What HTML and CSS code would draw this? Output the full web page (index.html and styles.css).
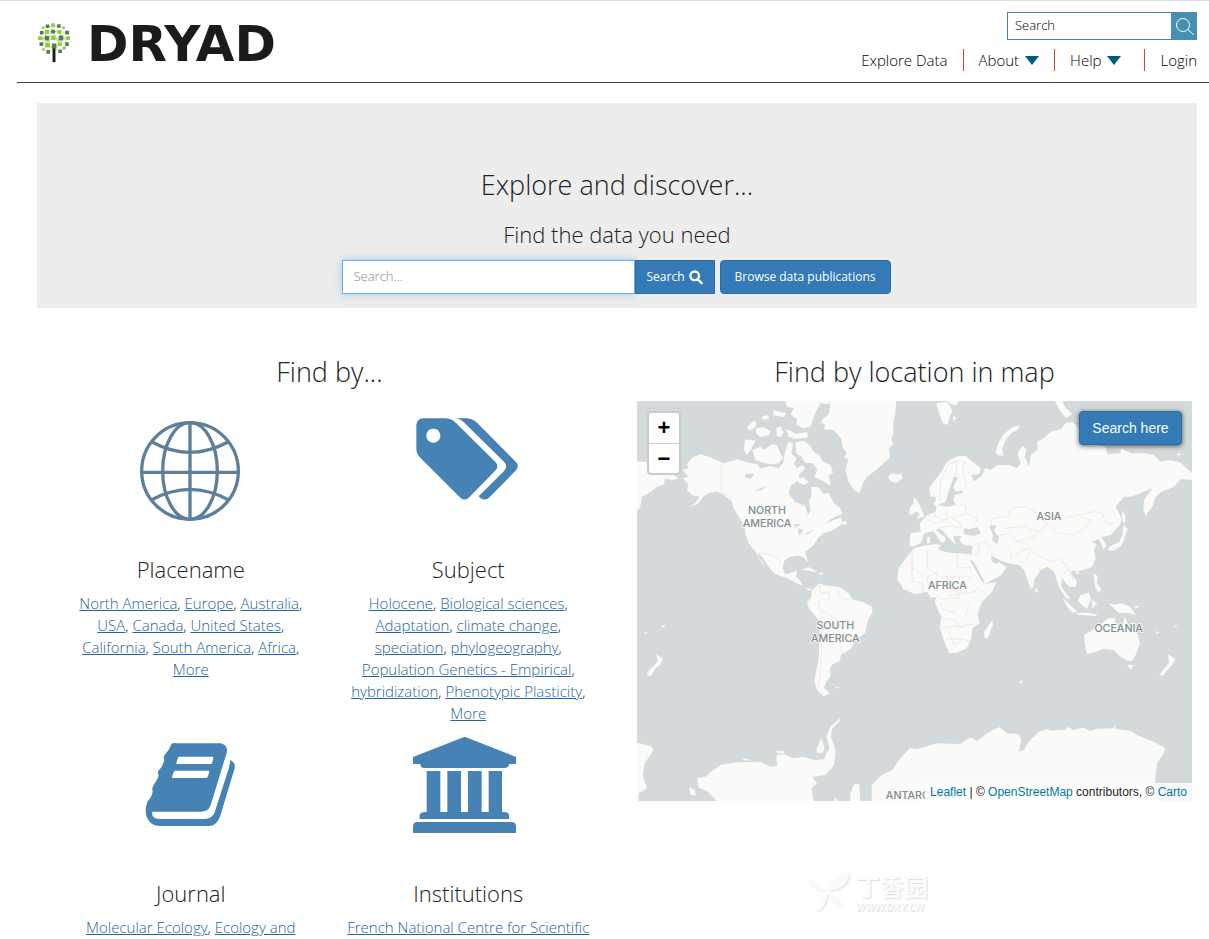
FILE: index.html
```html
<!DOCTYPE html>
<html lang="en">
<head>
<meta charset="utf-8">
<meta name="viewport" content="width=device-width, initial-scale=1">
<title>Dryad</title>
<link rel="stylesheet" href="styles.css">
</head>
<body>
<header class="site-header">
  <a class="logo" href="#" aria-label="Dryad home">
    <svg class="logo-tree" viewBox="108 60 105 128" aria-hidden="true">
      <g stroke="#a3c95c" stroke-width="2" fill="none"><path d="M141 76L176 76M123 95L157 91L202 95M118 112H205M122 131L158 112L201 131M139 92L122 131M177 92L202 131M158 72L139 134L178 152M158 92L178 132L143 154"/></g>
      <path fill="#1b1b1b" d="M156 138h9v48h-9z"/>
      <g fill="#4d7d5b"><path d="M135 70h11v11h-11zM170 69h11v11h-11zM117 90h11v11h-11zM152 86h12v12h-12zM195 89h12v12h-12zM132 105h13v14h-13zM175 104h14v15h-14zM116 125h11v11h-11zM154 129h14v15h-14zM195 125h11v11h-11zM137 149h11v11h-11zM174 147h11v11h-11z"/></g>
      <g fill="#98c93c"><path d="M152 66h11v11h-11zM123 76h8v8h-8zM186 76h8v8h-8zM133 86h12v13h-12zM171 87h12v12h-12zM111 106h14v12h-14zM152 104h13v14h-13zM197 106h13v12h-13zM133 126h15v15h-15zM172 125h12v12h-12zM124 143h8v8h-8zM187 138h10v9h-10z"/></g>
    </svg>
    <span class="logo-text">DRYAD</span>
  </a>
  <div class="header-tools">
    <form class="mini-search">
      <input type="text" aria-label="Search" placeholder="Search">
      <button type="button" aria-label="Submit search"><svg viewBox="0 0 26 26" aria-hidden="true"><circle cx="12" cy="12" r="6.5"/><path d="M16.8 16.5L23 22"/></svg></button>
    </form>
    <nav class="main-nav">
      <a href="#">Explore Data</a>
      <button type="button">About <span class="caret"></span></button>
      <button type="button" class="nav-help">Help <span class="caret"></span></button>
      <a href="#">Login</a>
    </nav>
  </div>
</header>

<main>
  <section class="hero">
    <h1>Explore and discover...</h1>
    <h2><label for="q">Find the data you need</label></h2>
    <form class="hero-form">
      <input id="q" type="text" placeholder="Search...">
      <button type="button" class="btn btn-search">Search <svg viewBox="0 0 42 44" aria-hidden="true"><circle cx="17" cy="17" r="13"/><path d="M26 27L38 39"/></svg></button>
      <a href="#" class="btn btn-browse">Browse data publications</a>
    </form>
  </section>

  <div class="columns">
    <section class="find">
      <h2 class="column-title">Find by...</h2>
      <div class="facets">
        <article class="facet">
          <svg class="facet-icon" viewBox="33 3 360 450" fill="none" stroke="#5f7f98" stroke-width="10" aria-hidden="true">
            <circle cx="210" cy="213" r="145"/><ellipse cx="210" cy="213" rx="82" ry="145"/><path d="M210 68V358M65 217H355M96 126Q210 188 324 126M96 299Q210 237 324 299"/>
          </svg>
          <h3>Placename</h3>
          <p><a href="#">North America</a>, <a href="#">Europe</a>, <a href="#">Australia</a>, <a href="#">USA</a>, <a href="#">Canada</a>, <a href="#">United States</a>, <a href="#">California</a>, <a href="#">South America</a>, <a href="#">Africa</a>, <a href="#">More</a></p>
        </article>
        <article class="facet">
          <svg class="facet-icon" viewBox="864 3 360 450" fill="#4682b4" aria-hidden="true">
            <path fill-rule="evenodd" d="M910 55H978Q995 56 1008 69L1127 187Q1138 199 1127 211L1046 293Q1034 304 1021 293L901 173Q889 161 889 146V76Q890 56 910 55ZM940 86a21 21 0 1 0 .1 0Z"/>
            <path d="M1008 55H1041Q1060 57 1072 69L1188 186Q1199 198 1188 211L1107 293Q1094 304 1081 294L1076 289L1150 215Q1166 200 1152 185L1030 65Q1021 57 1008 55Z"/>
          </svg>
          <h3>Subject</h3>
          <p><a href="#">Holocene</a>, <a href="#">Biological sciences</a>, <a href="#">Adaptation</a>, <a href="#">climate change</a>, <a href="#">speciation</a>, <a href="#">phylogeography</a>, <a href="#">Population Genetics - Empirical</a>, <a href="#">hybridization</a>, <a href="#">Phenotypic Plasticity</a>, <a href="#">More</a></p>
        </article>
        <article class="facet">
          <svg class="facet-icon" viewBox="33 -15 360 450" fill="#4682b4" aria-hidden="true">
            <path fill-rule="evenodd" d="M155 41Q162 38 170 40H302Q325 45 320 69L272 225Q266 244 246 245H97Q93 266 118 267H253Q277 267 284 247L326 116Q331 102 330 90Q348 97 344 115L301 257Q291 286 270 288H117Q91 287 80 261Q73 242 82 215Q97 200 98 184Q95 173 101 165Q112 149 116 137Q111 127 117 120Q128 110 133 91Q129 82 134 75Q147 61 155 41ZM177 80Q172 82 169 102H274Q279 97 280 80ZM165 122Q159 125 156 144H260Q266 139 268 122Z"/>
          </svg>
          <h3>Journal</h3>
          <p><a href="#">Molecular Ecology</a>, <a href="#">Ecology and</a></p>
        </article>
        <article class="facet">
          <svg class="facet-icon" viewBox="864 -15 360 450" fill="#4682b4" aria-hidden="true">
            <path d="M1034 20L1188 81V102H1168Q1166 112 1156 114H910Q901 111 900 102H879V81ZM920 123H961V246H982V123H1023V246H1044V123H1085V246H1106V123H1146V246Q1166 245 1167 255V267H899V255Q901 245 920 246ZM890 276H1177Q1187 278 1188 288V309H879V288Q880 277 890 276Z"/>
          </svg>
          <h3>Institutions</h3>
          <p><a href="#">French National Centre for Scientific</a></p>
        </article>
      </div>
    </section>

    <section class="location">
      <h2 class="column-title">Find by location in map</h2>
      <div class="map">
        <svg class="world" viewBox="0 0 1665 1200" preserveAspectRatio="xMidYMid slice" role="img" aria-label="World map">
          <g class="land">
            <g transform="translate(0 -3)">
              <path d="M0 184L30 186L36 222L60 225L100 218L125 235L105 241L85 236L80 255L60 260L42 276L15 290L10 320L0 333Z"/>
              <path d="M150 192L165 173L190 163L225 175L262 190L300 178L335 188L360 192L370 205L400 198L425 205L438 190L442 165L454 125L468 130L463 160L478 175L470 192L480 205L496 195L505 205L485 225L490 239L462 255L455 282L475 306L505 318L513 345L521 330L516 304L524 285L522 260L545 262L560 282L575 278L590 308L610 325L616 342L585 355L565 370L590 361L612 352L615 365L628 362L630 375L615 372L602 380L585 392L560 398L545 412L530 435L505 455L513 488L498 470L480 467L455 472L442 482L437 505L445 523L460 520L480 510L477 530L490 542L498 562L525 567L518 573L490 555L450 535L410 520L395 500L375 470L360 458L368 475L387 500L375 490L355 455L335 430L325 400L323 380L302 345L290 325L285 305L260 285L240 275L215 278L199 290L180 313L155 322L176 308L188 290L165 286L150 270L155 255L138 235L154 230L137 210L154 205Z"/>
              <path d="M475 128L500 122L520 138L530 155L548 165L556 184L580 195L588 218L575 228L582 258L560 245L545 236L532 231L541 208L525 188L505 190L493 170L478 160Z"/>
              <path d="M346 150L370 140L382 150L405 133L420 135L425 150L438 173L425 190L405 193L385 190L355 180ZM325 118L356 122L342 148L330 164L320 150ZM330 82L345 66L358 64L355 80L338 92ZM357 85L378 82L400 92L398 105L372 111L358 102ZM407 30L430 35L448 40L442 52L410 46ZM418 85L430 78L440 98L432 112L419 108ZM374 50L390 45L399 55L380 60ZM446 88L462 92L475 102L510 96L514 112L475 117L455 110ZM484 238L500 232L516 248L500 254L485 248Z"/>
              <path d="M443 0H580L575 12L550 10L535 38L530 52L520 80L500 85L478 76L480 58L461 44L470 25L450 20Z"/>
              <path d="M580 0H778L775 40L768 70L770 100L762 120L770 132L755 145L760 172L740 190L715 212L690 230L678 248L668 279L650 270L635 245L625 210L634 180L622 172L630 158L618 145L612 115L590 90L560 88L565 75L550 65L575 42L579 20Z"/>
              <path d="M754 228L767 220L783 224L792 220L797 234L780 249L758 243ZM495 508L518 502L541 516L520 514ZM541 520L560 518L555 524ZM818 325L830 310L829 292L840 300L855 330L862 350L838 356L848 343L838 334L825 344L815 343Z"/>
              <path d="M830 446L855 438L901 431L907 450L935 458L965 460L1000 463L1006 483L1025 520L1044 552L1078 547L1065 575L1035 605L1026 630L1022 645L1028 670L1006 685L1004 710L990 745L960 758L937 760L920 720L908 680L914 650L906 635L893 605L899 592L880 593L870 575L835 583L800 568L781 538L785 505L810 470Z"/>
            </g>
            <g transform="translate(831 -3)">
              <path d="M-14 435L-11 400L20 395L17 370L40 345L65 335L68 322L58 311L65 301L65 290L50 290L45 265L75 225L100 185L130 168L155 168L200 205L195 222L172 225L180 245L205 225L214 203L230 210L250 195L285 195L310 205L320 190L310 160L325 138L338 148L332 170L345 200L350 165L370 150L370 125L390 115L410 95L440 88L455 70L475 66L500 90L520 125L575 140L580 160L622 145L650 160L690 160L720 165L740 185L770 180L800 188L834 220V240L800 237L780 260L740 277L725 290L715 320L695 347L688 330L690 300L715 265L690 275L650 290L630 290L605 320L623 355L618 375L590 405L562 411L578 438L568 447L555 417L530 425L548 432L540 450L545 475L535 500L500 512L475 512L470 520L490 545L484 562L463 559L446 535L440 558L470 598L455 593L436 563L420 515L400 500L380 510L360 540L358 562L350 567L330 510L315 495L285 490L262 483L230 465L238 488L254 486L278 502L262 525L213 552L190 510L170 480L175 438L150 435L135 420L143 408L118 408L125 435L110 420L90 395L75 385L65 390L92 410L95 424L83 430L60 395L45 395L30 402L20 430L-5 440Z"/>
              <path d="M245 155L253 130L268 104L290 85L318 75L312 89L292 99L275 120L265 145L268 168L250 165ZM67 10L100 5L115 30L100 75L87 70L75 38ZM100 0H138L127 16L110 13ZM117 47L130 54L117 64ZM420 0H445L453 22L475 43L455 53L438 32ZM624 330L635 348L633 370L625 365ZM628 375L642 388L635 398L628 425L620 439L598 453L580 450L590 438L616 425L625 405ZM40 412L48 411L47 430L38 430ZM65 435L80 435L78 443ZM538 520L551 528L548 550L562 568L553 578L543 560ZM500 585L525 578L531 598L519 626L500 613L491 602ZM485 514L498 516L490 524ZM790 160L805 162L790 168ZM365 563L372 569L370 579L363 574Z"/>
            </g>
            <g transform="translate(0 597)">
              <path d="M525 -30L548 -50L560 -45L580 -43L610 -38L635 -20L645 -2L675 5L705 20L706 38L692 62L685 98L655 120L643 145L612 165L608 183L588 192L577 209L582 225L565 250L561 264L579 281L560 289L540 270L532 240L545 180L548 110L545 60L515 25L510 5L522 -5Z"/>
              <path d="M0 428L40 438L50 450L24 488L17 525L30 565L5 580V603H0ZM180 535L205 530L230 510L250 495L300 487L370 485L400 500L420 497L418 466L440 463L470 475L500 471L535 480L560 478L578 442L568 410L580 380L608 355L608 362L585 387L582 410L596 450L592 495L565 525L525 530L540 550L523 565L530 603H240L210 573L185 563ZM640 603L640 580L652 552L667 553L670 603ZM595 592L602 603H590ZM704 603V555L735 525L765 511L790 475L818 445L840 448L901 430L970 432L1000 412L1020 422L1055 397L1088 381L1110 400L1146 402L1153 420L1145 455L1160 450L1175 425L1205 395L1225 390L1232 386L1240 392L1285 389L1296 380L1304 391L1340 383L1360 393L1380 386L1430 385L1432 374L1437 388L1480 392L1500 405L1550 425L1585 445L1580 460L1560 490L1553 550L1560 603Z"/>
              <path d="M32 216L53 195L62 184L58 162L79 178L68 195L55 205L43 227H30ZM70 80L87 73L80 83ZM18 96L32 98L28 103ZM538 448L553 415L562 440L558 458L540 459ZM416 452L440 454L442 460L422 460ZM157 562L173 570L176 587L160 583ZM593 262L608 261L600 266ZM315 475L330 476L345 482L320 480Z"/>
            </g>
            <g transform="translate(831 597)">
              <path d="M510 105L545 85L560 72L585 55L605 54L600 74L625 85L632 50L645 80L672 105L678 130L665 165L655 182L640 182L620 172L600 150L570 146L545 155L520 163L515 148ZM210 95L235 60L237 75L222 113L212 115ZM640 194L658 195L650 210ZM447 -5L470 16L490 35L475 38L457 17ZM485 38L520 38L550 43L545 48L490 44ZM532 0L550 8L535 26ZM582 8L600 14L625 10L650 22L665 45L645 38L615 40L595 20ZM660 18L678 18L665 26ZM735 225L755 200L765 188L762 163L785 178L770 200L755 215L748 228ZM778 80L791 74L785 82ZM720 93L738 98L730 101ZM315 243L326 244L320 251Z"/>
            </g>
          </g>
          <g class="water" transform="translate(831 -3)">
            <path d="M70 315L95 305L106 268L120 228L132 234L118 262L125 275L148 270L145 280L122 285L118 300L125 315L100 320ZM148 399L150 384L165 388L190 382L202 400L180 407L160 405ZM225 378L247 376L240 392L255 412L250 432L235 422L237 404ZM168 480L178 483L210 542L211 554L196 532ZM231 466L241 484L254 486L248 493L233 482ZM576 140L622 145L618 160L580 163Z"/>
          </g>
          <g class="water">
            <path d="M325 219L353 218L340 234L324 228ZM352 270L387 254L375 268ZM467 370L493 370L476 379ZM483 382L500 386L486 405ZM502 398L530 386L510 401ZM504 203L520 186L530 202L520 226Z"/>
          </g>
          <g class="borders">
            <path d="M253 187V275L285 293M366 455L410 462L437 492M545 550L552 575L575 575L580 598M600 560L610 590L640 597M548 597L545 625L575 640L600 660L625 700M555 625L553 780L545 855M625 700L608 730L615 757L640 750M790 500L825 485V540M825 450V500L870 530L900 515M870 445V500L908 528H1000M960 460V500H1005M825 540L858 548V580M870 530L880 590M930 525L940 585L1020 570M900 520L890 580M910 595L965 590L975 560M908 650L960 660V680L1010 668M915 680L965 675L985 680M935 690L950 730L980 715M995 610L985 650M915 625L955 635M930 715H975L1000 720M1020 560L1050 580"/>
            <path transform="translate(831 -3)" d="M77 305L80 240L105 190L135 182L155 188M125 182L130 230M155 180L145 215L158 260M60 325L65 350L85 360L120 352L155 340L155 315L120 315M30 352L60 370L90 365L100 350M95 330L100 345M75 383L110 378L145 385M115 355L135 365L145 390M155 340L190 355L180 380M230 378L235 355L285 348L290 325L330 320L360 335L370 350L400 370L380 395L345 390L340 378L270 385M370 350L400 345L450 355L490 345L530 360L515 383L475 405L430 398L405 375M490 345L540 335L565 338L575 370L600 370M255 405L285 400L310 425L360 410L375 395M175 438L205 425L235 440M195 435V460L180 468M215 435L240 470M285 435L290 475L325 450L350 445L335 430L310 425M350 450L385 475L415 485L440 475L460 510M350 450L335 480L315 490M440 485L460 495L480 535M450 520L465 510L480 545"/>
          </g>
          <g class="labels">
            <text x="390" y="340">NORTH</text><text x="390" y="377">AMERICA</text>
            <text x="595" y="685">SOUTH</text><text x="595" y="722">AMERICA</text>
            <text x="1236" y="358">ASIA</text><text x="931" y="563">AFRICA</text>
            <text x="1445" y="692">OCEANIA</text><text x="850" y="1194">ANTARCTICA</text>
          </g>
        </svg>
        <div class="zoom-control"><button type="button" aria-label="Zoom in">+</button><button type="button" aria-label="Zoom out">−</button></div>
        <button type="button" class="btn search-here">Search here</button>
        <div class="attribution"><a href="#">Leaflet</a> | © <a href="#">OpenStreetMap</a> contributors, © <a href="#">Carto</a></div>
      </div>
    </section>
  </div>
</main>

<div class="watermark">
  <svg viewBox="0 0 130 120" aria-hidden="true"><path d="M4 24Q18 54 50 56Q20 38 4 24ZM60 55Q66 20 123 2Q119 50 67 56ZM52 64Q46 96 22 117Q50 112 58 68ZM63 67Q74 94 101 104Q84 76 63 67Z"/></svg>
  <div><strong>丁香园</strong><span>WWW.DXY.CN</span></div>
</div>
</body>
</html>
```

FILE: styles.css
```css
* { box-sizing: border-box; }

body {
  margin: 0;
  border-top: 1px solid #d5dedb;
  background: #fff;
  color: #222;
  font: 300 16px/22px "Open Sans", "Noto Sans", sans-serif;
}

h1, h2, h3, p { margin: 0; font-weight: 300; }
button, input { font: inherit; }
button { cursor: pointer; }

.site-header {
  display: flex;
  justify-content: space-between;
  margin-left: 17px;
  padding: 11px 12px 0 20px;
  height: 82px;
  border-bottom: 1px solid #444950;
}

.logo {
  display: flex;
  align-items: center;
  gap: 16px;
  height: 64px;
  color: #1b1b1b;
  text-decoration: none;
}
.logo-tree { width: 34px; height: 42px; margin-bottom: 4px; }
.logo-text { font: 700 50px/64px "DejaVu Sans", sans-serif; }

.header-tools { display: flex; flex-direction: column; align-items: flex-end; gap: 9px; }

.mini-search { display: flex; width: 190px; height: 28px; }
.mini-search input {
  flex: 1;
  min-width: 0;
  padding: 0 7px 2px;
  border: 1px solid #3f87a6;
  border-right: 0;
  font-size: 13px;
}
.mini-search input::placeholder { color: #000; opacity: 1; }
.mini-search button { width: 26px; padding: 0; border: 0; background: #468fb0; }
.mini-search svg { display: block; width: 26px; height: 26px; fill: none; stroke: #fff; stroke-width: 1; }

.main-nav { display: flex; align-items: center; }
.main-nav > * {
  display: flex;
  align-items: center;
  gap: 6px;
  height: 22px;
  padding: 0 15px;
  border: 0;
  border-left: 1px solid #c0492f;
  background: none;
  color: #000;
  font-size: 15px;
  line-height: 20px;
  text-decoration: none;
}
.main-nav > :first-child { border-left: 0; }
.main-nav > :last-child { padding-right: 0; }
.main-nav .nav-help { padding-right: 23px; }
.caret { border: 7px solid transparent; border-top: 9px solid #005a7e; border-bottom: 0; }

.hero {
  margin: 20px 12px 0 37px;
  padding: 64px 0 14px;
  background: #ededed;
  text-align: center;
}
.hero h1 { font-size: 27px; line-height: 36px; }
.hero h2 { margin-top: 18px; font-size: 22px; line-height: 26px; }
.hero-form { display: flex; justify-content: center; margin: 13px 2px 0 0; font-size: 13px; }
.hero-form input {
  width: 293px;
  height: 34px;
  padding: 0 11px 2px;
  border: 1px solid #66afe9;
  box-shadow: 0 0 8px #66afe999;
}
.hero-form input::placeholder { color: #888; opacity: 1; }

.btn {
  display: flex;
  align-items: center;
  justify-content: center;
  height: 34px;
  padding: 0 12px;
  border: 1px solid #2e6da4;
  border-radius: 4px;
  background: #337ab7;
  color: #fff;
  font-size: 12px;
  font-weight: 400;
  text-decoration: none;
}
.btn-search { gap: 4px; width: 80px; padding: 0; border-radius: 0; }
.btn-search svg { width: 14px; height: 15px; fill: none; stroke: #fff; stroke-width: 7; stroke-linecap: round; }
.btn-browse { width: 171px; margin-left: 5px; padding: 0; }

.columns {
  display: grid;
  grid-template-columns: minmax(0, 1fr) minmax(0, 1fr);
  gap: 30px;
  margin: 46px 17px 0 52px;
}
.column-title { padding-bottom: 11px; font-size: 27px; line-height: 36px; text-align: center; }

.facets { display: grid; grid-template-columns: 1fr 1fr; row-gap: 1px; }
.facet { padding: 0 15px; text-align: center; }
.facet-icon { display: block; width: 120px; height: 150px; margin: 0 auto; }
.facet h3 { padding-bottom: 5px; font-size: 22px; line-height: 36px; }
.facet p { font-size: 15px; }
.facet a { color: #22659f; text-decoration: underline; }

.map { position: relative; height: 400px; overflow: hidden; background: #d4dadc; }
.world { display: block; width: 100%; height: 100%; }
.land { fill: #fafaf8; }
.water { fill: #d4dadc; }
.borders { fill: none; stroke: #efdfdf; stroke-width: 2; }
.labels { fill: #7f8c95; font: 500 32px Inter, sans-serif; text-anchor: middle; stroke: #fafaf8; stroke-width: 5; paint-order: stroke; }

.zoom-control {
  position: absolute;
  top: 10px;
  left: 10px;
  width: 34px;
  border: 2px solid #00000033;
  border-radius: 4px;
  background: #fff;
}
.zoom-control button {
  display: block;
  width: 30px;
  height: 30px;
  padding: 0;
  border: 0;
  background: none;
  color: #000;
  font: bold 22px/30px "Liberation Sans", sans-serif;
}
.zoom-control button + button { border-top: 1px solid #ccc; }

.search-here {
  position: absolute;
  top: 10px;
  right: 10px;
  width: 103px;
  padding: 0;
  box-shadow: 0 1px 5px #000000a6;
  font: 14px/20px "Liberation Sans", sans-serif;
}

.attribution {
  position: absolute;
  right: 0;
  bottom: 0;
  padding: 0 5px;
  background: #ffffffcc;
  font: 12px/18px "Liberation Sans", sans-serif;
}
.attribution a { color: #0078a8; text-decoration: none; }

.watermark {
  position: absolute;
  right: 281px;
  top: 870px;
  display: flex;
  align-items: center;
  gap: 4px;
  color: #fbfbfb;
  text-shadow: 1px 1px 1px #ddd;
}
.watermark svg { width: 44px; height: 42px; fill: #fbfbfb; filter: drop-shadow(1px 1px 1px #ddd); }
.watermark strong, .watermark span { display: block; }
.watermark strong { font: 700 24px/32px "Noto Sans CJK SC", sans-serif; }
.watermark span { font: italic 700 10px/12px "Liberation Sans", sans-serif; }
```
